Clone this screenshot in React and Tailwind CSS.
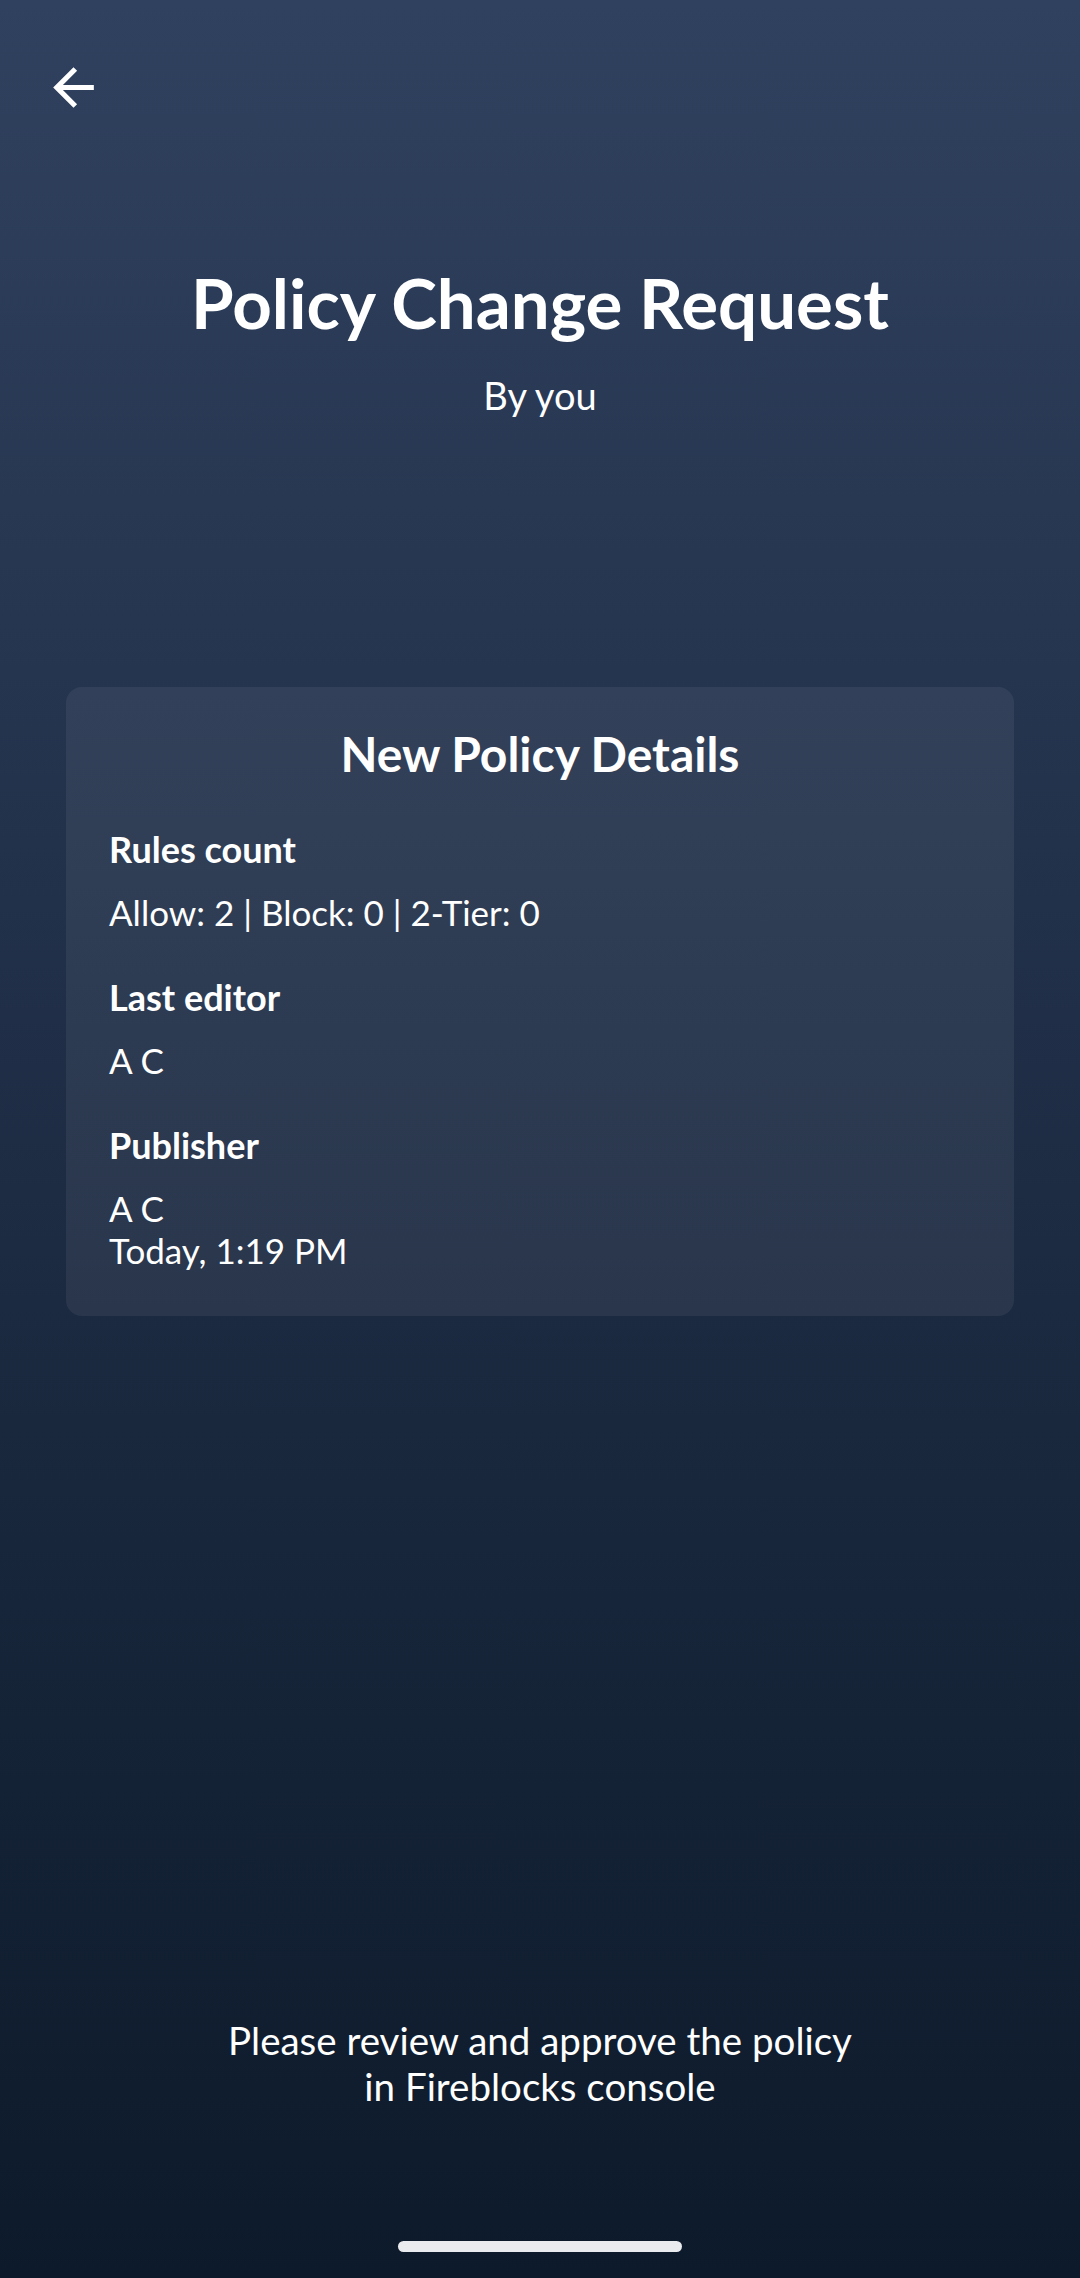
export default function App() {
  const rows = [
    { label: "Rules count", lines: ["Allow: 2 | Block: 0 | 2-Tier: 0"] },
    { label: "Last editor", lines: ["A C"] },
    { label: "Publisher", lines: ["A C", "Today, 1:19 PM"] },
  ];

  return (
    <div
      className="h-[2278px] w-full flex flex-col bg-gradient-to-b from-[#30415f] to-[#0d1a2b] text-white"
      style={{ fontFamily: "Lato, 'Open Sans', sans-serif" }}
    >
      {/* Top bar */}
      <div className="pt-[57px] pl-[43px]">
        <svg viewBox="0 0 24 24" className="w-[61px] h-[61px]" fill="#ffffff">
          <path d="M20 11H7.83l5.59-5.59L12 4l-8 8 8 8 1.41-1.41L7.83 13H20v-2z" />
        </svg>
      </div>

      <h1 className="mt-[145px] text-center text-[69px] leading-[80px] font-bold">Policy Change Request</h1>
      <p className="mt-[29px] text-center text-[38px] leading-[46px]">By you</p>

      {/* Details card */}
      <div className="mt-[269px] mx-[66px] rounded-[16px] bg-gradient-to-b from-[#324159] to-[#29364c] px-[43px] pt-[39px] pb-[45px]">
        <h2 className="text-center text-[48px] leading-[56px] font-bold">New Policy Details</h2>
        <div className="mt-[45px] flex flex-col gap-[42px]">
          {rows.map((r) => (
            <div key={r.label}>
              <p className="text-[36px] leading-[44px] font-bold">{r.label}</p>
              <div className="mt-[20px]">
                {r.lines.map((l) => (
                  <p key={l} className="text-[35px] leading-[42px]">{l}</p>
                ))}
              </div>
            </div>
          ))}
        </div>
      </div>

      {/* Footer */}
      <div className="mt-auto text-center text-[38.5px] leading-[46px]">
        <p>Please review and approve the policy</p>
        <p>in Fireblocks console</p>
      </div>
      <div className="mt-[132px] mb-[26px] mx-auto w-[284px] h-[11px] rounded-full bg-[#e9ebee]" />
    </div>
  );
}
